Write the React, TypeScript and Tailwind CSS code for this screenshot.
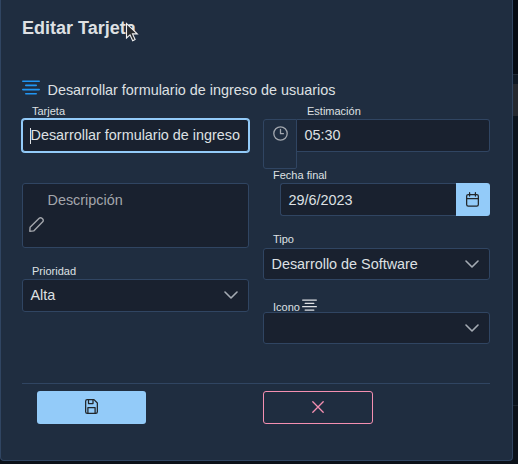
import React from "react";

function AlignIcon({ className }: { className: string }) {
  return (
    <svg className={className} viewBox="0 0 18 15" fill="none" stroke="currentColor" strokeWidth="1.6" strokeLinecap="round" preserveAspectRatio="none">
      <path d="M.8 1.3h16.4M3.8 5.4h10.4M.8 9.6h16.4M3.8 13.8h10.4" />
    </svg>
  );
}

function ClockIcon() {
  return (
    <svg className="h-[15px] w-[15px]" viewBox="0 0 15 15" fill="none" stroke="currentColor" strokeWidth="1.3" strokeLinecap="round" strokeLinejoin="round">
      <circle cx="7.5" cy="7.5" r="6.7" />
      <path d="M7.5 3.5v4.200h2.900" />
    </svg>
  );
}

function PencilIcon() {
  return (
    <svg className="h-[15px] w-[15px]" viewBox="0 0 15 15" fill="none" stroke="currentColor" strokeWidth="1.4" strokeLinejoin="round">
      <path d="M.8 14.200l.3-3.900L10.200 1.300a1.900 1.900 0 0 1 2.700 0l.8.8a1.900 1.900 0 0 1 0 2.700L4.700 13.900z" />
    </svg>
  );
}

function CalendarIcon() {
  return (
    <svg className="h-[15px] w-[13px]" viewBox="0 0 13 15" fill="none" stroke="currentColor" strokeWidth="1.25" strokeLinecap="round">
      <rect x=".65" y="2.500" width="11.700" height="11.600" rx="1.600" />
      <path d="M.6 6.500h11.800M3.600.7v3.400M9.400.7v3.400" />
    </svg>
  );
}

function SaveIcon() {
  return (
    <svg className="h-[15px] w-[13px]" viewBox="0 0 13 15" fill="none" stroke="currentColor" strokeWidth="1.25" strokeLinejoin="round">
      <path d="M2.100.65h6.900l3.350 3.350v8.700a1.600 1.600 0 0 1-1.600 1.600H2.250a1.600 1.600 0 0 1-1.600-1.600V2.200A1.550 1.550 0 0 1 2.100.65z" />
      <path d="M3.500.8v3.700h4.500V.8M2.900 14.200V8.500h7.200v5.700" />
    </svg>
  );
}

function Chevron() {
  return (
    <svg className="-mt-px h-2 w-[14px] text-[#a5abb3]" viewBox="0 0 14 8" fill="none" stroke="currentColor" strokeWidth="1.6" strokeLinecap="round" strokeLinejoin="round">
      <path d="M1 1l6 6 6-6" />
    </svg>
  );
}

function Select({ value, height }: { value: string; height: string }) {
  return (
    <div className={`flex items-center justify-between rounded-[3px] border border-[#304562] bg-[#19212f] pr-[10px] pl-[7.500px] ${height}`}>
      <span>{value}</span>
      <Chevron />
    </div>
  );
}

export default function App() {
  return (
    <div className="relative h-[464px] w-[518px] overflow-hidden bg-[#0b1119] font-['Liberation_Sans',Arial,sans-serif] text-[14.400px] leading-[17px] text-[#dee0e3]">
      <div className="absolute top-0 right-0 h-full w-[5px]">
        <div className="h-[74px] bg-[#060b13]" />
        <div className="h-[10px] border-t border-[#212a35] bg-[#0f1823]" />
        <div className="h-8 bg-[#25282e]" />
        <div className="h-[289px] bg-[#0b131c]" />
        <div className="h-px bg-[#1b232d]" />
      </div>

      <div className="relative flex h-[461px] w-[513px] flex-col rounded-b-[4px] border border-t-0 border-[#304562] bg-[#1f2d40] pr-[22px] pl-[21px]">
        <h1 className="h-[76px] pt-[18px] text-[18px] leading-[21px] font-bold">Editar Tarjeta</h1>

        <div className="flex h-[29px] items-start">
          <AlignIcon className="mt-[3.500px] h-[15px] w-[18px] text-[#2196f3]" />
          <span className="mt-[6px] ml-[7.500px] whitespace-nowrap">Desarrollar formulario de ingreso de usuarios</span>
        </div>

        <div className="flex h-[278px] gap-[14px]">
          <div className="w-[227px]">
            <label className="block h-[14px] pl-[10px] text-[11px] leading-[13px]">Tarjeta</label>
            <div className="flex h-[33px] items-center rounded-[3px] border border-[#93cbf9] bg-[#19212f] pl-[7px] whitespace-nowrap ring-1 ring-[#93cbf9]">
              <span className="-mr-px h-4 w-px bg-[#dee0e3]" />
              <span className="pl-[.5px]">Desarrollar formulario de ingreso</span>
            </div>
            <div className="mt-[31px] h-[65px] rounded-[3px] border border-[#304562] bg-[#19212f] pl-[6px] text-[#a3a6ac]">
              <div className="pt-[8px] pl-[18.500px]">Descripción</div>
              <div className="mt-[7.500px]"><PencilIcon /></div>
            </div>
            <label className="mt-[17px] block h-[14px] pl-[10px] text-[11px] leading-[13px]">Prioridad</label>
            <Select value="Alta" height="h-[33px]" />
          </div>

          <div className="w-[227px]">
            <label className="block h-[14px] pl-[44px] text-[11px] leading-[13px]">Estimación</label>
            <div className="flex h-[50px] items-start">
              <div className="flex h-[50px] w-[34px] justify-center rounded-l-[3px] rounded-br-[2px] border border-[#304562] pt-[6px] text-[#a3a8af]">
                <ClockIcon />
              </div>
              <div className="flex h-[33px] flex-1 items-center rounded-r-[3px] border border-l-0 border-[#304562] bg-[#19212f] pl-[7.500px]">05:30</div>
            </div>
            <label className="block h-[14px] pl-[10px] text-[11px] leading-[13px]">Fecha final</label>
            <div className="ml-[17px] flex h-[33px]">
              <div className="flex flex-1 items-center rounded-l-[3px] border border-r-0 border-[#304562] bg-[#19212f] pt-px pl-[7.500px]">29/6/2023</div>
              <div className="flex w-[34px] items-start justify-center rounded-r-[3px] bg-[#93cbf9] pt-[8.500px] pr-px text-[#212529]"><CalendarIcon /></div>
            </div>
            <label className="mt-[17px] block h-[15px] pl-[10px] text-[11px] leading-[13px]">Tipo</label>
            <Select value="Desarrollo de Software" height="h-8" />
            <div className="mt-[19px] flex h-[13px] pl-[10px] text-[11px] leading-[13px]">
              <label className="mt-[2px]">Icono</label>
              <AlignIcon className="ml-[2px] h-[12px] w-[15px]" />
            </div>
            <Select value="" height="h-8" />
          </div>
        </div>

        <div className="flex border-t border-[#304562] pt-[7px] pl-[15px]">
          <button className="flex h-[33px] w-[109px] items-start justify-center rounded-[3px] bg-[#93cbf9] pt-2 text-[#212529]"><SaveIcon /></button>
          <button className="ml-[117px] flex h-[33px] w-[110px] items-start justify-center rounded-[3px] border border-[#f48fb1] pt-[9px] text-[#f48fb1]">
            <svg className="h-3 w-3" viewBox="0 0 12 12" fill="none" stroke="currentColor" strokeWidth="1.3" strokeLinecap="round"><path d="M.8.8l10.400 10.400M11.200.8L.8 11.200" /></svg>
          </button>
        </div>
      </div>

      <svg className="absolute top-[22px] left-[125px] h-[21px] w-[14px]" viewBox="0 0 14 21" fill="#292b2e" stroke="#f2f2f2" strokeWidth="1.1" strokeLinejoin="miter">
        <path d="M1.500 1.500v14.500l3.500-3.200 2.700 5.900 2.400-1.100-2.600-5.700h4.800z" />
      </svg>
    </div>
  );
}
